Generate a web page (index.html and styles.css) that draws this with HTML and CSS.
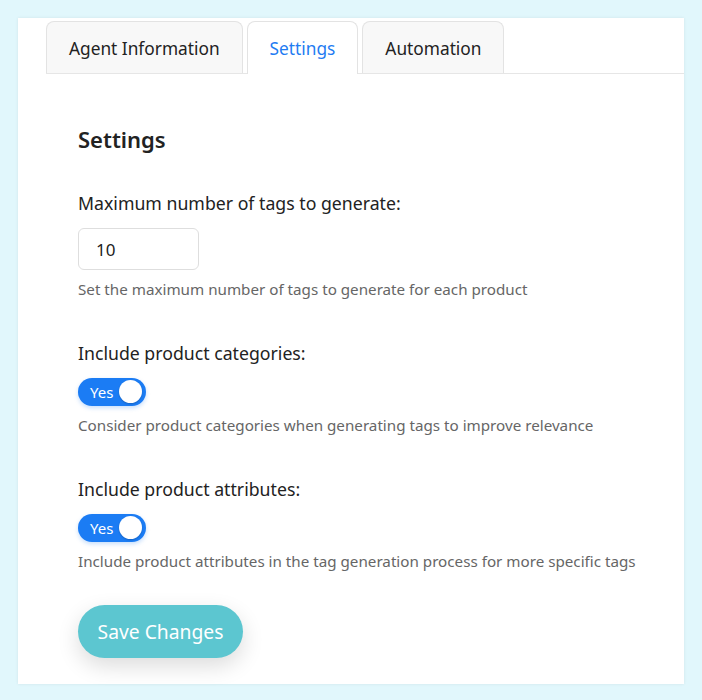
FILE: index.html
```html
<!DOCTYPE html>
<html lang="en">
<head>
<meta charset="utf-8">
<title>Settings</title>
<link rel="stylesheet" href="styles.css">
</head>
<body>
<div class="panel">
  <nav class="tabs">
    <button class="tab">Agent Information</button>
    <button class="tab active">Settings</button>
    <button class="tab">Automation</button>
  </nav>
  <section class="content">
    <h2 class="title">Settings</h2>

    <div class="group">
      <label class="label" for="maxtags">Maximum number of tags to generate:</label>
      <input class="num-input" id="maxtags" type="text" value="10">
      <p class="help">Set the maximum number of tags to generate for each product</p>
    </div>

    <div class="group">
      <div class="label">Include product categories:</div>
      <div class="toggle"><span class="toggle-text">Yes</span><span class="knob"></span></div>
      <p class="help">Consider product categories when generating tags to improve relevance</p>
    </div>

    <div class="group">
      <div class="label">Include product attributes:</div>
      <div class="toggle"><span class="toggle-text">Yes</span><span class="knob"></span></div>
      <p class="help">Include product attributes in the tag generation process for more specific tags</p>
    </div>

    <button class="save">Save Changes</button>
  </section>
</div>
</body>
</html>
```

FILE: styles.css
```css
* { box-sizing: border-box; }

html, body {
  margin: 0;
  padding: 0;
}

body {
  background: #e1f7fc;
  font-family: "Noto Sans", "DejaVu Sans", sans-serif;
  color: #222;
  padding: 18px;
}

.panel {
  background: #fff;
  height: 666px;
  padding: 3px 0 0 28px;
  box-shadow: 0 0 3px rgba(0, 0, 0, 0.08);
}

.tabs {
  display: flex;
  gap: 4px;
  border-bottom: 1px solid #e6e6e6;
  height: 53px;
}

.tab {
  font-family: inherit;
  font-size: 17.3px;
  color: #222;
  background: #f8f8f8;
  border: 1px solid #e3e3e3;
  border-bottom: none;
  border-radius: 8px 8px 0 0;
  padding: 1px 22px 0;
  height: 52px;
  cursor: pointer;
}

.tab.active {
  background: #fff;
  color: #1f7cf2;
  height: 53px;
}

.content {
  padding: 52px 0 0 32px;
}

.title {
  margin: 0;
  font-size: 22px;
  line-height: 26px;
  font-weight: 600;
  color: #222;
}

.group {
  display: flex;
  flex-direction: column;
  align-items: flex-start;
  margin-top: 39px;
}

.group + .group {
  margin-top: 41.5px;
}

.label {
  font-size: 17.7px;
  line-height: 24px;
  color: #222;
}

.num-input {
  margin-top: 13px;
  width: 121px;
  height: 42px;
  border: 1px solid #dedede;
  border-radius: 6px;
  padding: 0 17px;
  font-family: inherit;
  font-size: 17px;
  color: #222;
  outline: none;
}

.help {
  margin: 9px 0 0;
  font-size: 15.2px;
  line-height: 20px;
  color: #666;
}

.toggle {
  margin-top: 13px;
  width: 68px;
  height: 28px;
  border-radius: 14px;
  background: #1b7cf4;
  display: flex;
  align-items: center;
  justify-content: space-between;
  padding: 0 4px 0 12px;
  box-shadow: 0 2px 4px rgba(27, 124, 244, 0.25);
}

.toggle + .help {
  margin-top: 9.5px;
}

.toggle-text {
  color: #fff;
  font-size: 15px;
  line-height: 20px;
}

.knob {
  width: 23px;
  height: 23px;
  border-radius: 50%;
  background: #fff;
  box-shadow: 0 1px 2px rgba(0, 0, 0, 0.2);
}

.save {
  margin-top: 34px;
  width: 165px;
  height: 53px;
  border: none;
  border-radius: 27px;
  background: #5cc6d0;
  color: #fff;
  font-family: inherit;
  font-size: 19.3px;
  box-shadow: 0 8px 22px rgba(0, 0, 0, 0.14);
  cursor: pointer;
}
```
